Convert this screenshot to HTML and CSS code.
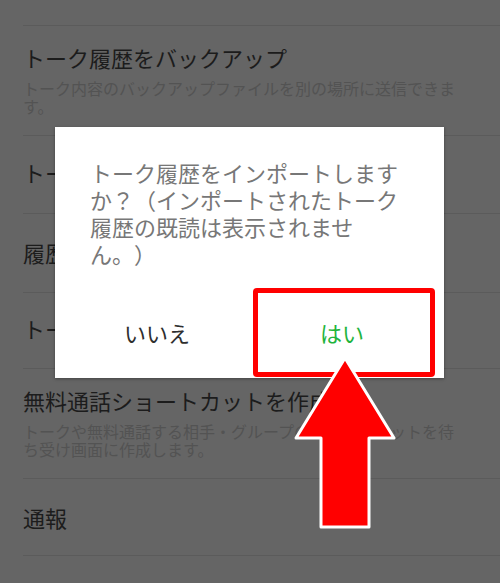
FILE: index.html
```html
<!DOCTYPE html>
<html lang="ja">
<head>
<meta charset="utf-8">
<link rel="stylesheet" href="styles.css">
</head>
<body>
<div class="list">
  <div class="row tall">
    <div class="title">トーク履歴をバックアップ</div>
    <div class="sub">トーク内容のバックアップファイルを別の場所に送信できます。</div>
  </div>
  <div class="row">
    <div class="title">トーク履歴をインポート</div>
  </div>
  <div class="row r3">
    <div class="title">履歴を削除</div>
  </div>
  <div class="row r4">
    <div class="title">トーク背景</div>
  </div>
  <div class="row tall">
    <div class="title">無料通話ショートカットを作成</div>
    <div class="sub">トークや無料通話する相手・グループのショートカットを待ち受け画面に作成します。</div>
  </div>
  <div class="row r6">
    <div class="title">通報</div>
  </div>
  <div class="end"></div>
</div>

<div class="dialog">
  <div class="message">トーク履歴をインポートしますか？（インポートされたトーク履歴の既読は表示されません。）</div>
  <div class="buttons">
    <div class="btn no">いいえ</div>
    <div class="btn yes">はい</div>
  </div>
</div>

<div class="highlight"></div>

<svg class="arrow" width="500" height="583" viewBox="0 0 500 583">
  <polygon points="345,358 394,438 369,438 369,527 321,527 321,438 296,438" fill="#ff0000" stroke="#ffffff" stroke-width="3" stroke-linejoin="round"/>
</svg>
</body>
</html>
```

FILE: styles.css
```css
html, body {
  margin: 0;
  padding: 0;
}
body {
  width: 500px;
  height: 583px;
  overflow: hidden;
  background: #656565;
  font-family: "Noto Sans CJK JP", "Noto Sans", sans-serif;
  position: relative;
}
.list {
  padding-top: 25px;
  padding-left: 23px;
}
.row {
  border-top: 1px solid #5b5b5b;
  padding: 22px 32px 27px 0;
  height: 28px;
}
.row.tall {
  height: auto;
  padding: 17px 32px 20px 0;
}
.row.r3 {
  padding-top: 24px;
  padding-bottom: 26px;
}
.row.r4 {
  padding-top: 21px;
  padding-bottom: 26px;
}
.row.r6 {
  padding-top: 24px;
  padding-bottom: 24px;
}
.end {
  border-top: 1px solid #5b5b5b;
}
.title {
  font-size: 22px;
  line-height: 28px;
  color: #1c1c1c;
  white-space: nowrap;
}
.sub {
  margin-top: 8px;
  font-size: 16px;
  line-height: 18px;
  color: #535353;
}
.dialog {
  position: absolute;
  left: 55px;
  top: 127px;
  width: 389px;
  height: 251px;
  background: #ffffff;
  box-shadow: 0 1px 3px rgba(0, 0, 0, 0.35);
  display: flex;
  flex-direction: column;
}
.message {
  padding: 32px 39px 0 35px;
  height: 108px;
  font-size: 22px;
  line-height: 27px;
  color: #777777;
  text-spacing-trim: space-all;
}
.buttons {
  margin-top: 23px;
  height: 88px;
  padding: 0 12px;
  display: grid;
  grid-template-columns: 180px 180px;
  column-gap: 5px;
}
.btn {
  display: flex;
  align-items: center;
  justify-content: center;
  font-size: 22px;
  padding-bottom: 4px;
}
.no {
  color: #2e2e2e;
}
.yes {
  color: #1fb43c;
}
.highlight {
  position: absolute;
  left: 253px;
  top: 288px;
  width: 172px;
  height: 79px;
  border: 5px solid #ff0000;
  border-radius: 4px;
}
.arrow {
  position: absolute;
  left: 0;
  top: 0;
}
```
